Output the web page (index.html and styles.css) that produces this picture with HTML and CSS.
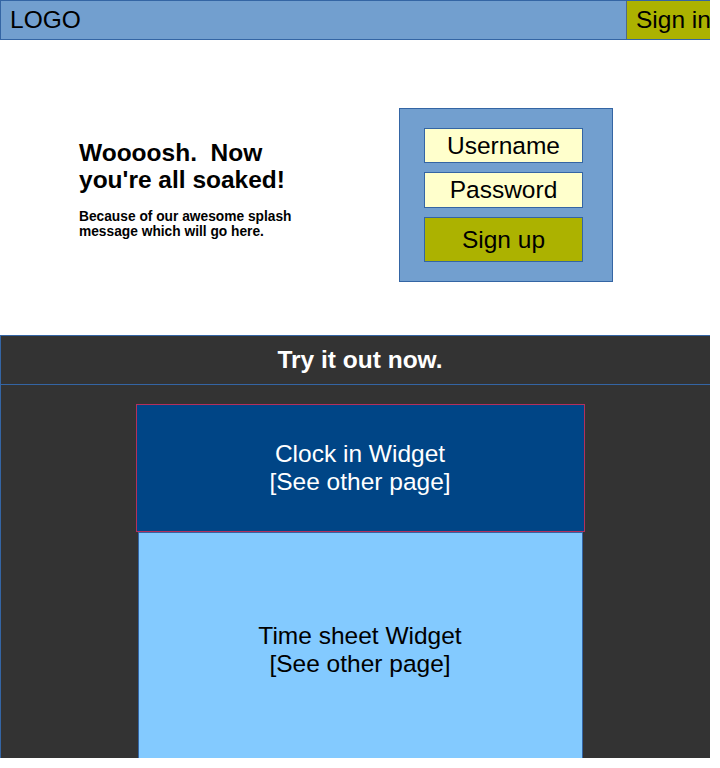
FILE: index.html
```html
<!DOCTYPE html>
<html>
<head>
<meta charset="utf-8">
<link rel="stylesheet" href="styles.css">
</head>
<body>
<div class="frame">
  <div class="page">
    <header class="topbar">
      <div class="logo">LOGO</div>
      <div class="signin">Sign in</div>
    </header>
    <section class="hero">
      <div class="pitch">
        <h1 class="headline">Woooosh.&nbsp; Now<br>you're all soaked!</h1>
        <p class="blurb">Because of our awesome splash<br>message which will go here.</p>
      </div>
      <div class="loginbox">
        <div class="field">Username</div>
        <div class="field field-pass">Password</div>
        <div class="signup">Sign up</div>
      </div>
    </section>
    <section class="tryit">
      <div class="tryit-title">Try it out now.</div>
      <div class="widgets">
        <div class="clock">Clock in Widget<br>[See other page]</div>
        <div class="timesheet">Time sheet Widget<br>[See other page]</div>
      </div>
    </section>
  </div>
</div>
</body>
</html>
```

FILE: styles.css
```css
html, body {
  margin: 0;
  padding: 0;
  background: #ffffff;
}
body {
  font-family: "Liberation Sans", Arial, sans-serif;
}
.frame {
  width: 710px;
  height: 758px;
  overflow: hidden;
}
.page {
  width: 720px;
  height: 768px;
}
.topbar {
  box-sizing: border-box;
  height: 40px;
  display: flex;
  justify-content: space-between;
  align-items: stretch;
  background: #729fcf;
  border: 1px solid #3465a4;
}
.logo {
  display: flex;
  align-items: center;
  padding-left: 9px;
  font-size: 24.5px;
  color: #000;
}
.signin {
  display: flex;
  align-items: center;
  box-sizing: border-box;
  width: 93px;
  padding-left: 9px;
  background: #acb200;
  border-left: 1px solid #4f6a86;
  font-size: 24.5px;
  color: #000;
}
.hero {
  box-sizing: border-box;
  height: 295px;
  display: flex;
  align-items: flex-start;
  padding-top: 68px;
  padding-left: 79px;
}
.pitch {
  width: 320px;
  padding-top: 31px;
}
.headline {
  margin: 0;
  font-size: 24.5px;
  line-height: 27px;
  font-weight: bold;
  color: #000;
}
.blurb {
  margin: 16px 0 0 0;
  font-size: 13.75px;
  line-height: 15px;
  font-weight: bold;
  color: #000;
}
.loginbox {
  box-sizing: border-box;
  width: 214px;
  height: 174px;
  padding: 19px 29px 19px 24px;
  display: flex;
  flex-direction: column;
  gap: 9px;
  background: #729fcf;
  border: 1px solid #3465a4;
}
.field {
  box-sizing: border-box;
  height: 35px;
  display: flex;
  align-items: center;
  justify-content: center;
  background: #ffffcc;
  border: 1px solid #3465a4;
  font-size: 24.5px;
  color: #000;
}
.field-pass {
  height: 36px;
}
.signup {
  box-sizing: border-box;
  height: 45px;
  display: flex;
  align-items: center;
  justify-content: center;
  background: #acb200;
  border: 1px solid #3465a4;
  font-size: 24.5px;
  color: #000;
}
.tryit {
  box-sizing: border-box;
  height: 433px;
  background: #333333;
  border: 1px solid #3465a4;
  border-bottom: none;
}
.tryit-title {
  height: 48px;
  line-height: 48px;
  text-align: center;
  color: #ffffff;
  font-size: 24.5px;
  font-weight: bold;
  border-bottom: 1px solid #3465a4;
}
.widgets {
  display: flex;
  flex-direction: column;
  align-items: center;
  padding-top: 19px;
}
.clock {
  box-sizing: border-box;
  width: 449px;
  height: 128px;
  display: flex;
  align-items: center;
  justify-content: center;
  text-align: center;
  background: #004586;
  border: 1px solid #b4305c;
  color: #ffffff;
  font-size: 24.5px;
  line-height: 28px;
}
.timesheet {
  box-sizing: border-box;
  width: 445px;
  height: 236px;
  display: flex;
  align-items: center;
  justify-content: center;
  text-align: center;
  background: #83caff;
  border: 1px solid #3465a4;
  color: #000000;
  font-size: 24.5px;
  line-height: 28px;
}
```
